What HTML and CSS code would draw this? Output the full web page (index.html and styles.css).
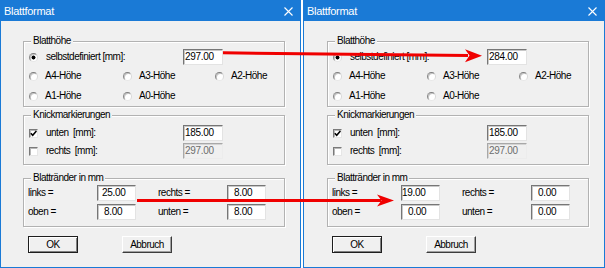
FILE: index.html
```html
<!DOCTYPE html>
<html>
<head>
<meta charset="utf-8">
<link rel="stylesheet" href="styles.css">
</head>
<body>
<div class="screen">
  <div class="win win-a">
    <div class="titlebar">
      <span class="title">Blattformat</span>
      <svg class="close" viewBox="0 0 9 9"><path d="M0.5 0.5L8.5 8.5M8.5 0.5L0.5 8.5"/></svg>
    </div>
    <div class="dlg">
      <div class="group g-height">
        <div class="legend">Blatthöhe</div>
        <div class="row3">
          <span class="radio on"></span><span class="lbl">selbstdefiniert [mm]:</span><span class="field">297.00</span>
        </div>
        <div class="radio-grid">
          <div class="opt"><span class="radio"></span>A4-Höhe</div>
          <div class="opt"><span class="radio"></span>A3-Höhe</div>
          <div class="opt"><span class="radio"></span>A2-Höhe</div>
          <div class="opt"><span class="radio"></span>A1-Höhe</div>
          <div class="opt"><span class="radio"></span>A0-Höhe</div>
        </div>
      </div>
      <div class="group g-fold">
        <div class="legend">Knickmarkierungen</div>
        <div class="fold-rows">
          <div class="row3">
            <span class="check on"><svg viewBox="0 0 7 7"><path d="M0.8 3.2L2.7 5.2L6.4 0.9"/></svg></span><span class="lbl">unten&nbsp; [mm]:</span><span class="field">185.00</span>
          </div>
          <div class="row3">
            <span class="check"></span><span class="lbl">rechts&nbsp; [mm]:</span><span class="field off">297.00</span>
          </div>
        </div>
      </div>
      <div class="group g-margin">
        <div class="legend">Blattränder in mm</div>
        <div class="margin-rows">
          <div class="row4">
            <span class="lbl">links =</span><span class="field f-sm ind4">25.00</span>
            <span class="lbl">rechts =</span><span class="field f-sm ind6">8.00</span>
          </div>
          <div class="row4">
            <span class="lbl">oben =</span><span class="field f-sm ind6">8.00</span>
            <span class="lbl">unten =</span><span class="field f-sm ind6">8.00</span>
          </div>
        </div>
      </div>
      <div class="buttons">
        <span class="btn default">OK</span>
        <span class="btn">Abbruch</span>
      </div>
    </div>
  </div>

  <div class="win win-b">
    <div class="titlebar">
      <span class="title">Blattformat</span>
      <svg class="close" viewBox="0 0 9 9"><path d="M0.5 0.5L8.5 8.5M8.5 0.5L0.5 8.5"/></svg>
    </div>
    <div class="dlg">
      <div class="group g-height">
        <div class="legend">Blatthöhe</div>
        <div class="row3">
          <span class="radio on"></span><span class="lbl">selbstdefiniert [mm]:</span><span class="field">284.00</span>
        </div>
        <div class="radio-grid">
          <div class="opt"><span class="radio"></span>A4-Höhe</div>
          <div class="opt"><span class="radio"></span>A3-Höhe</div>
          <div class="opt"><span class="radio"></span>A2-Höhe</div>
          <div class="opt"><span class="radio"></span>A1-Höhe</div>
          <div class="opt"><span class="radio"></span>A0-Höhe</div>
        </div>
      </div>
      <div class="group g-fold">
        <div class="legend">Knickmarkierungen</div>
        <div class="fold-rows">
          <div class="row3">
            <span class="check on"><svg viewBox="0 0 7 7"><path d="M0.8 3.2L2.7 5.2L6.4 0.9"/></svg></span><span class="lbl">unten&nbsp; [mm]:</span><span class="field">185.00</span>
          </div>
          <div class="row3">
            <span class="check"></span><span class="lbl">rechts&nbsp; [mm]:</span><span class="field off">297.00</span>
          </div>
        </div>
      </div>
      <div class="group g-margin">
        <div class="legend">Blattränder in mm</div>
        <div class="margin-rows">
          <div class="row4">
            <span class="lbl">links =</span><span class="field f-sm ind0">19.00</span>
            <span class="lbl">rechts =</span><span class="field f-sm ind6">0.00</span>
          </div>
          <div class="row4">
            <span class="lbl">oben =</span><span class="field f-sm ind6">0.00</span>
            <span class="lbl">unten =</span><span class="field f-sm ind6">0.00</span>
          </div>
        </div>
      </div>
      <div class="buttons">
        <span class="btn default">OK</span>
        <span class="btn">Abbruch</span>
      </div>
    </div>
  </div>

  <svg class="arrows" viewBox="0 0 605 268" width="605" height="268">
    <path class="shaft" d="M223 52.8L468 55.6"/>
    <polygon class="head" points="482,55.8 465,49.2 469.5,55.6 465,62.2"/>
    <path class="shaft" d="M137 200.5L381 200.5"/>
    <polygon class="head" points="394,200.5 377,194.5 381.5,200.5 377,206.5"/>
  </svg>
</div>
</body>
</html>
```

FILE: styles.css
```css
* {
  box-sizing: border-box;
  margin: 0;
  padding: 0;
}

html, body {
  background: #fff;
}

body {
  width: 605px;
  height: 268px;
  overflow: hidden;
  font-family: "Liberation Sans", Arial, sans-serif;
  font-size: 10px;
  letter-spacing: -0.5px;
  color: #000;
}

.screen {
  position: relative;
  display: flex;
  gap: 2px;
  width: 605px;
  height: 268px;
}

.win {
  height: 268px;
  border: 1px solid #1a7ad6;
  background: #f0f0f0;
  display: flex;
  flex-direction: column;
}

.win-a { width: 301px; }
.win-b { width: 302px; }

.titlebar {
  height: 20px;
  flex: none;
  background: #1a7ad6;
  color: #fff;
  display: flex;
  align-items: center;
  padding: 0 7px 0 3px;
}

.title {
  font-size: 11px;
  letter-spacing: -0.3px;
  line-height: 12px;
}

.close {
  width: 9px;
  height: 9px;
  margin-left: auto;
  fill: none;
  stroke: #fff;
  stroke-width: 1.1;
}

.dlg {
  padding: 20px 0 0 22px;
}

.win-b .dlg {
  padding-left: 23px;
}

.group {
  width: 262px;
  border: 1px solid #b2b2b2;
  box-shadow: inset 1px 1px 0 #fff, 1px 1px 0 #fff;
  padding-left: 5px;
}

.legend {
  width: max-content;
  height: 12px;
  line-height: 12px;
  margin: -7px 0 0 2px;
  padding: 0 2px;
  background: #f0f0f0;
}

.lbl {
  white-space: nowrap;
  line-height: 12px;
}

/* rows with control + label + field */
.row3 {
  display: grid;
  grid-template-columns: 17px 137px 40px;
  align-items: center;
  height: 16px;
}

.g-height .row3 {
  margin-top: 2px;
}

.radio-grid {
  margin-top: 1px;
  display: grid;
  grid-template-columns: 94px 92px 1fr;
  grid-auto-rows: 20px;
  align-items: center;
}

.opt {
  display: flex;
  align-items: center;
  white-space: nowrap;
  line-height: 12px;
}

.radio {
  width: 9px;
  height: 9px;
  border-radius: 50%;
  border: 1px solid;
  border-color: #7d7d7d #d8d8d8 #e8e8e8 #8a8a8a;
  background: #fff;
  box-shadow: inset 1px 1px 0 #c4c4c4;
  flex: none;
}

.opt .radio {
  margin-right: 7px;
}

.radio.on {
  background: radial-gradient(circle at 50% 50%, #000 0 1.7px, #fff 2.3px);
}

.g-fold {
  margin-top: 8px;
  padding-bottom: 4px;
}

.fold-rows {
  margin-top: 3px;
}

.fold-rows .row3 {
  height: 18px;
}

.check {
  width: 9px;
  height: 9px;
  border: 1px solid;
  border-color: #7a7a7a #e6e6e6 #e6e6e6 #7a7a7a;
  box-shadow: inset 1px 1px 0 #b8b8b8;
  background: #fff;
  display: flex;
  align-items: center;
  justify-content: center;
}

.check svg {
  width: 7px;
  height: 7px;
  fill: none;
  stroke: #000;
  stroke-width: 1.6;
}

.field {
  height: 16px;
  width: 40px;
  background: #fff;
  border: 1px solid;
  border-color: #767676 #e3e3e3 #e3e3e3 #767676;
  box-shadow: inset 1px 1px 0 #c8c8c8;
  padding-left: 1px;
  line-height: 14px;
  letter-spacing: -0.3px;
  white-space: nowrap;
  overflow: hidden;
}

.field.off {
  background: #f0f0f0;
  color: #6d6d6d;
  border-color: #a8a8a8 #ececec #ececec #a8a8a8;
  box-shadow: inset 1px 1px 0 #d4d4d4;
}

.f-sm { width: 39px; }
.ind0 { padding-left: 0; }
.ind4 { padding-left: 4px; }
.ind6 { padding-left: 6px; }

.g-margin {
  margin-top: 13px;
  padding-bottom: 6px;
}

.margin-rows {
  margin: 1px 0 0 -1px;
  display: flex;
  flex-direction: column;
  gap: 3px;
}

.row4 {
  display: grid;
  grid-template-columns: 69px 61px 69px 39px;
  align-items: center;
  height: 16px;
}

.buttons {
  margin: 9px 0 0 5px;
  display: flex;
  gap: 44px;
}

.btn {
  width: 50px;
  height: 17px;
  display: flex;
  align-items: center;
  justify-content: center;
  line-height: 12px;
  border: 1px solid;
  border-color: #fff #3c3c3c #3c3c3c #fff;
  box-shadow: inset -1px -1px 0 #a0a0a0;
}

.btn.default {
  border-color: #1e1e1e;
  box-shadow: inset 1px 1px 0 #fff, inset -1px -1px 0 #808080;
}

.arrows {
  position: absolute;
  left: 0;
  top: 0;
  pointer-events: none;
}

.shaft {
  fill: none;
  stroke: #f00000;
  stroke-width: 3;
}

.head {
  fill: #f00000;
}
```
